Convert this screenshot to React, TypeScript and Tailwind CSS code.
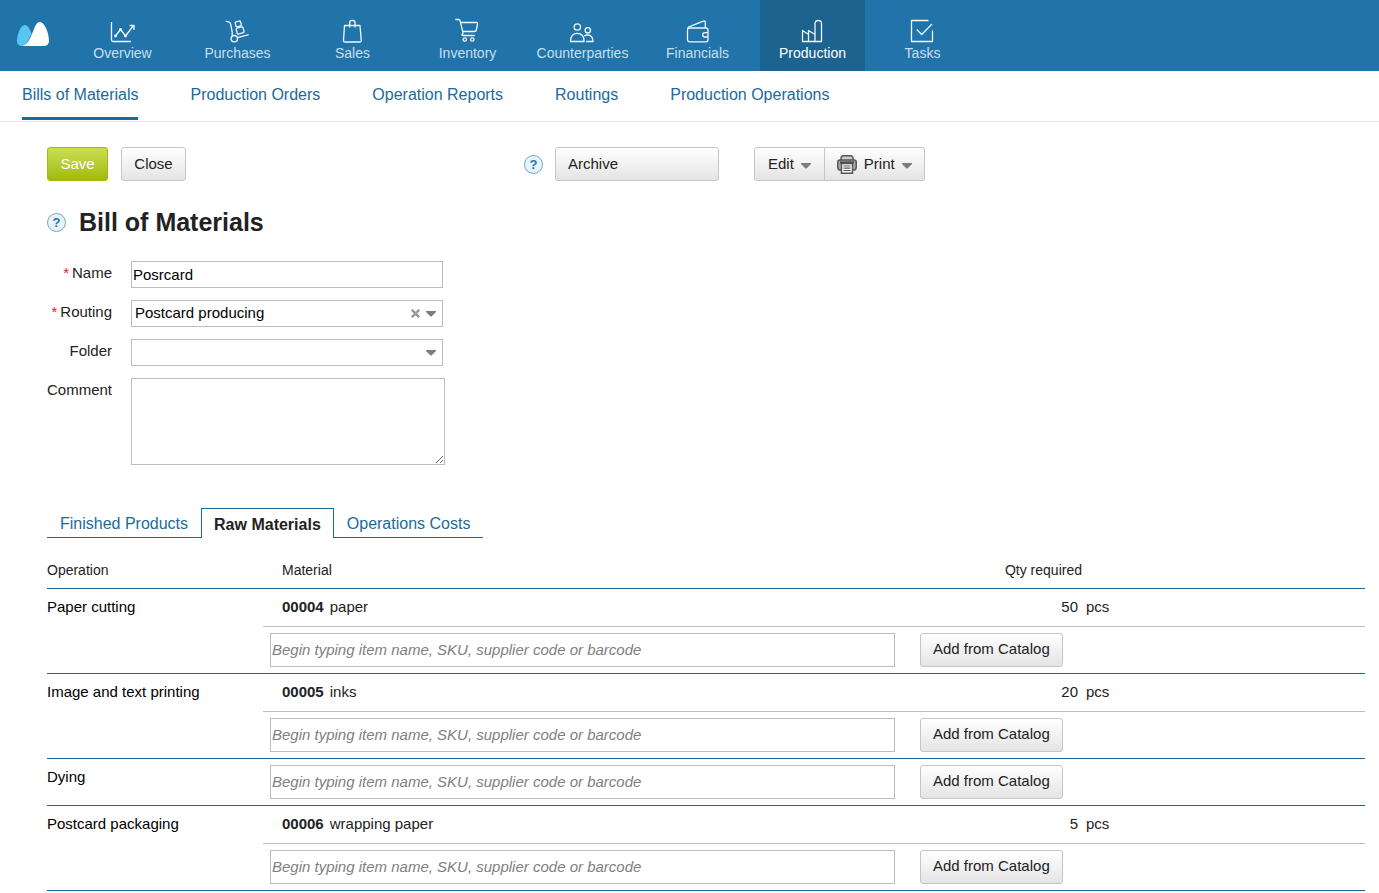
import { Fragment, useState, type ReactNode } from 'react';
import clsx from 'clsx';

interface NavItem {
  label: string;
  icon: ReactNode;
}

interface Operation {
  name: string;
  materials: { sku: string; title: string; qty: number; unit: string }[];
}

const navItems: NavItem[] = [
  {
    label: 'Overview',
    icon: (
      <>
        <path d="M1.5 2v18q0 1.5 1.5 1.5h18" />
        <path d="M5.5 16l5-6.5 5 6.5 8-10.5M19.5 5.5h4.5v4.5" />
        <g fill="currentColor" stroke="none">
          <circle cx="5.5" cy="16" r="1.4" />
          <circle cx="10.5" cy="9.5" r="1.4" />
          <circle cx="15.5" cy="16" r="1.4" />
        </g>
      </>
    ),
  },
  {
    label: 'Purchases',
    icon: (
      <>
        <path d="M.7 1.2l3.4 1q1.2.4 1.5 1.8l1.6 8q.2 1.5-.2 3.3M12.5 17.7l11.2-3" />
        <circle cx="9.3" cy="18.7" r="3.2" />
        <rect x="10.5" y="1.5" width="5.5" height="5" rx="1" transform="rotate(-15 13 4)" />
        <rect x="11.5" y="7.5" width="7" height="6" rx="1" transform="rotate(-15 15 10)" />
      </>
    ),
  },
  {
    label: 'Sales',
    icon: (
      <>
        <path d="M4.5 5.5h15.5l1.2 14.8q.1 1.7-1.5 1.7H5q-1.6 0-1.5-1.7z" />
        <path d="M9.7 7.5V2.5q0-2 2-2h1.3q2 0 2 2v5" />
      </>
    ),
  },
  {
    label: 'Inventory',
    icon: (
      <>
        <path d="M.3-.5h3.2q1.2 0 1.5 1.2l2.8 11q.4 3-1 3.3 0 .5 1.5.5h11.5" />
        <path d="M5.5 2.5h15.8q1.5 0 1.2 1.5l-1.2 6q-.3 1.5-1.6 1.5H7.7" />
        <circle cx="9.8" cy="19.5" r="1.7" />
        <circle cx="17.3" cy="19.5" r="1.7" />
      </>
    ),
  },
  {
    label: 'Counterparties',
    icon: (
      <>
        <circle cx="7.3" cy="7" r="3.2" />
        <path d="M.5 21.5q0-8.2 6.8-8.2t6.8 8.2z" />
        <circle cx="17.8" cy="10.3" r="2.7" />
        <path d="M14.3 16q1.2-1 3.3-1 5 0 5.5 6.5h-7" />
      </>
    ),
  },
  {
    label: 'Financials',
    icon: (
      <>
        <path d="M23 12.5v-2.5q0-2-2-2H4.5q-2 0-2 2v9.5q0 2.3 2.3 2.3h16q2.2 0 2.2-2.3v-2.3" />
        <path d="M2.8 8.3q.2-1 1.2-1.5L18.3 1.2q2-.7 2 1.3V8M23 12.6h-3q-2.3 0-2.3 2.2t2.3 2.2h3z" />
      </>
    ),
  },
  {
    label: 'Production',
    icon: <path d="M2.5 21.5V10.5l6 4v-4l6.5 4V3.500q0-3 3.300-3t3.200 3v18zM8.500 14v7.500M15 14v7.500" />,
  },
  {
    label: 'Tasks',
    icon: (
      <>
        <path d="M18.5.5H1.5v21h21v-11" />
        <path d="M6.7 9.5l5 5L22 4" />
      </>
    ),
  },
];

const sections = [
  'Bills of Materials',
  'Production Orders',
  'Operation Reports',
  'Routings',
  'Production Operations',
];

const tabs = ['Finished Products', 'Raw Materials', 'Operations Costs'];

const operations: Operation[] = [
  { name: 'Paper cutting', materials: [{ sku: '00004', title: 'paper', qty: 50, unit: 'pcs' }] },
  { name: 'Image and text printing', materials: [{ sku: '00005', title: 'inks', qty: 20, unit: 'pcs' }] },
  { name: 'Dying', materials: [] },
  { name: 'Postcard packaging', materials: [{ sku: '00006', title: 'wrapping paper', qty: 5, unit: 'pcs' }] },
];

const buttonClass =
  'flex h-[34px] items-center border border-[#c6c6c6] bg-linear-to-b from-white to-[#e4e4e4] text-[15px] text-[#222] whitespace-nowrap';

const fieldClass = 'w-[312px] h-[27px] border border-[#bdbdbd] bg-white text-[15px] text-black outline-none';

const Caret = ({ className }: { className?: string }) => (
  <svg viewBox="0 0 10 6" className={clsx('h-[6px] w-[10px] shrink-0 fill-[#7d7d7d]', className)} aria-hidden="true">
    <path d="M0 0h10v1L5.5 5.5h-1L0 1z" />
  </svg>
);

const HelpButton = () => (
  <button
    type="button"
    aria-label="Help"
    className="flex size-[19px] shrink-0 items-center justify-center rounded-full border border-[#6fa6ca] bg-[#e6f5fd] text-[13px] leading-none font-bold text-[#2a76a6]"
  >
    ?
  </button>
);

const PrinterIcon = () => (
  <svg viewBox="0 0 20 19" className="h-[19px] w-5 shrink-0" fill="none" stroke="#555" strokeWidth="1.5" aria-hidden="true">
    <path d="M4 5V2.5L5.5.8h9L16 2.5V5" fill="#ccc" />
    <path d="M4 15H2.500Q.8 14.500.8 12.500V7q0-2 2-2h14.400q2 0 2 2v5.500q0 2-1.700 2.500H16" fill="#aaa" />
    <path d="M3 7.5h14" stroke="#444" strokeWidth="2" />
    <path d="M4.5 8.5h11v9.7h-11z" fill="#fff" />
    <path d="M6.5 11h7M6.5 13.2h7M6.5 15.5h7" strokeWidth="1.2" />
  </svg>
);

const Header = () => (
  <header className="flex h-[71px] bg-[#2074a9]">
    <a href="#" aria-label="Home" className="flex w-[70px] shrink-0 pt-[22px] pl-[17px]">
      <svg viewBox="0 0 32 24" className="h-6 w-8" aria-hidden="true">
        <path d="M0 19C0 13 3.5 3 7.5 3c3.5 0 6 5 7 9L8 24H5.5C2 24 0 22.5 0 19z" fill="#5bc5f2" />
        <path d="M5.5 24c5-1 8-8.5 10.5-14.5C18 4.5 19.5 0 22.7 0 28 0 32 12 32 18.500c0 3.700-2 5.500-5.500 5.500z" fill="#fff" />
      </svg>
    </a>
    <nav className="flex gap-[10px]">
      {navItems.map((item) => (
        <a
          key={item.label}
          href="#"
          className={clsx(
            'flex flex-col items-center pt-5 text-[14px] leading-[18px]',
            item.label === 'Tasks' ? 'w-[95px]' : 'w-[105px]',
            item.label === 'Production' ? 'bg-[#1c638f] text-white' : 'text-[#c9dfed]',
          )}
        >
          <svg
            viewBox="0 0 25 24"
            className="h-6 w-[25px] shrink-0 overflow-visible text-[#f1f7fb]"
            fill="none"
            stroke="currentColor"
            strokeWidth="1.3"
            strokeLinejoin="round"
            aria-hidden="true"
          >
            {item.icon}
          </svg>
          {item.label}
        </a>
      ))}
    </nav>
  </header>
);

const SectionNav = () => (
  <nav className="flex h-[51px] gap-[52px] border-b border-[#e8e8e8] pl-[22px] text-[16px] text-[#1c6a9c]">
    {sections.map((section, index) => (
      <a
        key={section}
        href="#"
        className={clsx('h-[49px] pt-3 leading-6 whitespace-nowrap', index === 0 && 'border-b-[3px] border-[#1c6a9c]')}
      >
        {section}
      </a>
    ))}
  </nav>
);

const Toolbar = () => (
  <div className="flex items-center">
    <div className="flex w-[477px] gap-[13px]">
      <button
        type="button"
        className="h-[34px] w-[61px] rounded-[3px] border border-[#a3bb0a] bg-linear-to-b from-[#c9df4f] to-[#a2ba00] text-[15px] text-white"
      >
        Save
      </button>
      <button type="button" className={clsx(buttonClass, 'w-[65px] justify-center rounded-[3px]')}>
        Close
      </button>
    </div>
    <HelpButton />
    <button type="button" className={clsx(buttonClass, 'ml-3 w-[164px] rounded-[3px] px-3')}>
      Archive
    </button>
    <div className="ml-[35px] flex">
      <button type="button" className={clsx(buttonClass, 'gap-[7px] rounded-l-[3px] px-[13px]')}>
        Edit
        <Caret className="mt-1" />
      </button>
      <button type="button" className={clsx(buttonClass, 'gap-[7px] rounded-r-[3px] border-l-0 px-3')}>
        <PrinterIcon />
        Print
        <Caret className="mt-1" />
      </button>
    </div>
  </div>
);

const FieldLabel = ({ htmlFor, required, children }: { htmlFor: string; required?: boolean; children: ReactNode }) => (
  <label htmlFor={htmlFor} className="pt-[2px] text-right text-[15px] leading-5">
    {required && <span className="mr-[3px] text-[#f0142f]">*</span>}
    {children}
  </label>
);

const DetailsForm = () => {
  const [name, setName] = useState('Posrcard');
  const [routing, setRouting] = useState('Postcard producing');

  return (
    <form className="mt-[23px] grid grid-cols-[65px_auto] justify-start gap-x-[19px] gap-y-3">
      <FieldLabel htmlFor="name" required>
        Name
      </FieldLabel>
      <input id="name" className={clsx(fieldClass, 'px-px')} value={name} onChange={(e) => setName(e.target.value)} />

      <FieldLabel htmlFor="routing" required>
        Routing
      </FieldLabel>
      <div className="relative w-[312px]">
        <select
          id="routing"
          className={clsx(fieldClass, 'block appearance-none pl-[3px]')}
          value={routing}
          onChange={(e) => setRouting(e.target.value)}
        >
          <option value=""></option>
          <option>Postcard producing</option>
        </select>
        <button
          type="button"
          aria-label="Clear routing"
          onClick={() => setRouting('')}
          className="absolute top-[9px] right-[23px]"
        >
          <svg viewBox="0 0 9 9" className="size-[9px]" stroke="#999" strokeWidth="2.5" aria-hidden="true">
            <path d="M.8.8l7.4 7.4M8.2.8L.8 8.2" />
          </svg>
        </button>
        <Caret className="pointer-events-none absolute top-[11px] right-[7px]" />
      </div>

      <FieldLabel htmlFor="folder">Folder</FieldLabel>
      <div className="relative w-[312px]">
        <select id="folder" className={clsx(fieldClass, 'block appearance-none pl-[3px]')}>
          <option value=""></option>
        </select>
        <Caret className="pointer-events-none absolute top-[11px] right-[7px]" />
      </div>

      <FieldLabel htmlFor="comment">Comment</FieldLabel>
      <textarea id="comment" className="h-[87px] w-[314px] resize border border-[#bdbdbd] p-[2px] text-[15px] outline-none" />
    </form>
  );
};

const MaterialTabs = () => {
  const [active, setActive] = useState('Raw Materials');

  return (
    <div role="tablist" className="mt-[43px] flex text-[16px]">
      {tabs.map((tab) => (
        <button
          key={tab}
          type="button"
          role="tab"
          aria-selected={tab === active}
          onClick={() => setActive(tab)}
          className={clsx(
            'h-[30px] border-[#1c6a9c] pt-[2px]',
            tab === active ? 'border-x border-t px-3 font-bold text-[#222]' : 'border-b px-[13px] text-[#1c6a9c]',
          )}
        >
          {tab}
        </button>
      ))}
    </div>
  );
};

const MaterialsTable = () => (
  <table className="w-full table-fixed border-collapse text-left text-[15px]">
    <colgroup>
      <col className="w-[216px]" />
      <col />
      <col className="w-[180px]" />
      <col className="w-[283px]" />
    </colgroup>
    <thead>
      <tr className="h-[50px] border-b border-[#1c6a9c] text-[14px]">
        <th className="pt-[15px] font-normal">Operation</th>
        <th className="pt-[15px] pl-[19px] font-normal">Material</th>
        <th className="pt-[15px] text-right font-normal">Qty required</th>
        <td></td>
      </tr>
    </thead>
    <tbody>
      {operations.map((operation) => {
        const nameCell = (
          <td rowSpan={operation.materials.length + 1} className="pt-2 align-top leading-5 text-black">
            {operation.name}
          </td>
        );

        return (
          <Fragment key={operation.name}>
            {operation.materials.map((material, index) => (
              <tr key={material.sku} className="h-[38px]">
                {index === 0 && nameCell}
                <td className="border-b border-[#bdbdbd] pl-[19px]">
                  <span className="mr-[6px] font-bold">{material.sku}</span>
                  {material.title}
                </td>
                <td className="border-b border-[#bdbdbd] pr-1 text-right">{material.qty}</td>
                <td className="border-b border-[#bdbdbd] pl-1">{material.unit}</td>
              </tr>
            ))}
            <tr className="h-[47px] border-b border-[#1c6a9c]">
              {operation.materials.length === 0 && nameCell}
              <td className="px-[7px]">
                <input
                  aria-label={`Add material to ${operation.name}`}
                  placeholder="Begin typing item name, SKU, supplier code or barcode"
                  className="block h-[34px] w-full border border-[#bdbdbd] px-px outline-none placeholder:text-[#808080] placeholder:italic"
                />
              </td>
              <td colSpan={2} className="pl-[18px]">
                <button type="button" className={clsx(buttonClass, 'rounded-[3px] px-3')}>
                  Add from Catalog
                </button>
              </td>
            </tr>
          </Fragment>
        );
      })}
    </tbody>
  </table>
);

const App = () => (
  <div className="bg-white font-['Liberation_Sans',Arial,sans-serif] text-[#222]">
    <Header />
    <SectionNav />
    <main className="pt-[25px] pr-[14px] pl-[47px]">
      <Toolbar />
      <div className="mt-[25px] flex items-center gap-[13px]">
        <HelpButton />
        <h1 className="text-[25px] leading-8 font-bold">Bill of Materials</h1>
      </div>
      <DetailsForm />
      <MaterialTabs />
      <MaterialsTable />
    </main>
  </div>
);

export default App;
